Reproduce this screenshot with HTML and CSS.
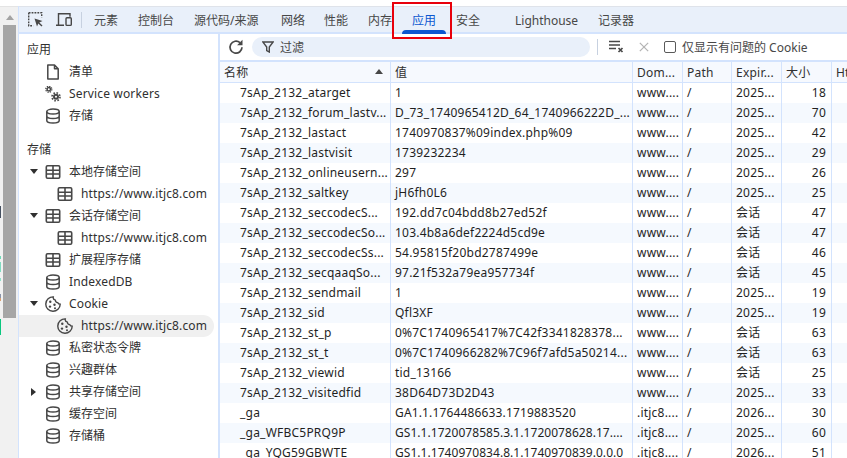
FILE: index.html
```html
<!DOCTYPE html>
<html lang="zh">
<head>
<meta charset="utf-8">
<title>DevTools</title>
<link rel="stylesheet" href="styles.css">
</head>
<body>
<svg class="defs" width="0" height="0">
  <symbol id="db" viewBox="0 0 16 16"><ellipse cx="8" cy="3.600" rx="6.200" ry="2.500" fill="none" stroke="currentColor" stroke-width="1.500"/><path d="M1.800 3.600v8.800c0 1.400 2.800 2.500 6.200 2.500s6.200-1.100 6.200-2.500V3.600M1.800 8c0 1.400 2.800 2.500 6.200 2.500s6.200-1.100 6.200-2.500" fill="none" stroke="currentColor" stroke-width="1.500"/></symbol>
  <symbol id="grid" viewBox="0 0 16 16"><rect x="1.300" y="1.800" width="13.400" height="12.400" rx="1.200" fill="none" stroke="currentColor" stroke-width="1.600"/><path d="M1.300 6.200h13.400M1.300 10h13.400M8 1.800v12.400" fill="none" stroke="currentColor" stroke-width="1.600"/></symbol>
  <symbol id="cookie" viewBox="0 0 16 16"><path d="M8.300 .9a2.700 2.700 0 0 0 2 3.200 2.700 2.700 0 0 0 2.500 2.600 2.700 2.700 0 0 0 2.400 1.500A7.200 7.200 0 1 1 8.300 .9z" fill="none" stroke="currentColor" stroke-width="1.400"/><circle cx="5.300" cy="5.800" r="1.200" fill="currentColor"/><circle cx="5" cy="10.600" r="1.200" fill="currentColor"/><circle cx="9.500" cy="8.800" r="1.200" fill="currentColor"/><circle cx="10" cy="12.300" r="1" fill="currentColor"/></symbol>
</svg>
<div class="page">
  <div class="rail">
    <div class="rail-arrow"></div>
    <div class="rail-thumb"></div>
  </div>
  <div class="devtools">
    <div class="tabbar">
      <svg class="tool-icon" viewBox="0 0 15 15"><path d="M.7.700h13v4.500M.7.700v13h4.500" fill="none" stroke="#474747" stroke-width="1.400" stroke-dasharray="1.800 1.100"/><path d="M6.500 6.500l8 2.600-3.200 1.300 3.200 3.200-1 1-3.200-3.200-1.300 3.200z" fill="#474747"/></svg>
      <svg class="tool-icon device" viewBox="0 0 16 15"><path d="M0 13.300h8M2.500 13V1.700h11.500v3" fill="none" stroke="#474747" stroke-width="1.400"/><rect x="10" y="5.700" width="5.300" height="7.700" rx="1" fill="none" stroke="#474747" stroke-width="1.400"/></svg>
      <span class="tab-sep"></span>
      <span class="tab w-yuansu">元素</span>
      <span class="tab w-console">控制台</span>
      <span class="tab w-source">源代码/来源</span>
      <span class="tab w-net">网络</span>
      <span class="tab w-perf">性能</span>
      <span class="tab w-mem">内存</span>
      <span class="tab active w-app">应用</span>
      <span class="tab w-sec">安全</span>
      <span class="tab w-light">Lighthouse</span>
      <span class="tab w-rec">记录器</span>
    </div>
    <div class="panes">
      <aside class="sidebar">
        <div class="section">应用</div>
        <div class="item"><span class="arrow"></span><svg class="ic" viewBox="0 0 16 16"><path d="M2.800 .9h6.700L13.200 4.700v10.400H2.800zM9.500 .9v3.800h3.700" fill="none" stroke="currentColor" stroke-width="1.500" stroke-linejoin="round"/></svg><span>清单</span></div>
        <div class="item"><span class="arrow"></span><svg class="ic" viewBox="0 0 16 16"><g fill="none" stroke="currentColor"><circle cx="3.800" cy="3.300" r="1.700" stroke-width="1.500"/><circle cx="3.800" cy="3.300" r="3" stroke-width="1.300" stroke-dasharray="1.300 1.050"/><circle cx="11" cy="10.800" r="2" stroke-width="2"/><circle cx="11" cy="10.800" r="4" stroke-width="1.600" stroke-dasharray="1.600 1.540"/></g></svg><span class="lat">Service workers</span></div>
        <div class="item"><span class="arrow"></span><svg class="ic"><use href="#db"/></svg><span>存储</span></div>
        <div class="section second">存储</div>
        <div class="item"><span class="arrow down"></span><svg class="ic"><use href="#grid"/></svg><span>本地存储空间</span></div>
        <div class="item child"><svg class="ic"><use href="#grid"/></svg><span class="lat">https://www.itjc8.com</span></div>
        <div class="item"><span class="arrow down"></span><svg class="ic"><use href="#grid"/></svg><span>会话存储空间</span></div>
        <div class="item child"><svg class="ic"><use href="#grid"/></svg><span class="lat">https://www.itjc8.com</span></div>
        <div class="item"><span class="arrow"></span><svg class="ic"><use href="#grid"/></svg><span>扩展程序存储</span></div>
        <div class="item"><span class="arrow"></span><svg class="ic"><use href="#db"/></svg><span class="lat">IndexedDB</span></div>
        <div class="item"><span class="arrow down"></span><svg class="ic"><use href="#cookie"/></svg><span class="lat">Cookie</span></div>
        <div class="item child selected"><svg class="ic"><use href="#cookie"/></svg><span class="lat">https://www.itjc8.com</span></div>
        <div class="item"><span class="arrow"></span><svg class="ic"><use href="#db"/></svg><span>私密状态令牌</span></div>
        <div class="item"><span class="arrow"></span><svg class="ic"><use href="#db"/></svg><span>兴趣群体</span></div>
        <div class="item"><span class="arrow right"></span><svg class="ic"><use href="#db"/></svg><span>共享存储空间</span></div>
        <div class="item"><span class="arrow"></span><svg class="ic"><use href="#db"/></svg><span>缓存空间</span></div>
        <div class="item"><span class="arrow"></span><svg class="ic"><use href="#db"/></svg><span>存储桶</span></div>
      </aside>
      <main class="main">
        <div class="filterbar">
          <svg class="reload" viewBox="0 0 16 16"><path d="M14 8.300A6 6 0 1 1 12 3.700" fill="none" stroke="#474747" stroke-width="1.700"/><path d="M14.500 .8v5.400H9.100z" fill="#474747"/></svg>
          <div class="filter"><svg class="funnel" viewBox="0 0 12 12"><path d="M.8 1h10.400L7.300 6v5L4.700 9.500V6z" fill="none" stroke="#474747" stroke-width="1.400"/></svg><span class="filter-label">过滤</span></div>
          <span class="bar-sep"></span>
          <svg class="clear" viewBox="0 0 16 16"><path d="M0 2.500h11M0 6h11M0 9.500h7" stroke="#474747" stroke-width="1.400" fill="none"/><path d="M9.500 9l4 4M13.500 9l-4 4" stroke="#474747" stroke-width="1.700" fill="none"/></svg>
          <svg class="close" viewBox="0 0 12 12"><path d="M1 1l10 10M11 1L1 11" stroke="#b4b4b4" stroke-width="1.500" fill="none"/></svg>
          <span class="check"></span>
          <span class="check-label">仅显示有问题的 Cookie</span>
        </div>
        <table class="grid">
          <colgroup><col class="c1"><col class="c2"><col class="c3"><col class="c4"><col class="c5"><col class="c6"><col class="c7"></colgroup>
          <thead><tr><th class="sorted">名称</th><th>值</th><th>Dom...</th><th>Path</th><th>Expir...</th><th>大小</th><th>Htt</th></tr></thead>
          <tbody>
            <tr><td class="n">7sAp_2132_atarget</td><td>1</td><td>www....</td><td>/</td><td>2025...</td><td class="r">18</td><td></td></tr>
            <tr><td class="n">7sAp_2132_forum_lastv...</td><td>D_73_1740965412D_64_1740966222D_...</td><td>www....</td><td>/</td><td>2025...</td><td class="r">70</td><td></td></tr>
            <tr><td class="n">7sAp_2132_lastact</td><td>1740970837%09index.php%09</td><td>www....</td><td>/</td><td>2025...</td><td class="r">42</td><td></td></tr>
            <tr><td class="n">7sAp_2132_lastvisit</td><td>1739232234</td><td>www....</td><td>/</td><td>2025...</td><td class="r">29</td><td></td></tr>
            <tr><td class="n">7sAp_2132_onlineusern...</td><td>297</td><td>www....</td><td>/</td><td>2025...</td><td class="r">26</td><td></td></tr>
            <tr><td class="n">7sAp_2132_saltkey</td><td>jH6fh0L6</td><td>www....</td><td>/</td><td>2025...</td><td class="r">25</td><td></td></tr>
            <tr><td class="n">7sAp_2132_seccodecS...</td><td>192.dd7c04bdd8b27ed52f</td><td>www....</td><td>/</td><td>会话</td><td class="r">47</td><td></td></tr>
            <tr><td class="n">7sAp_2132_seccodecSo...</td><td>103.4b8a6def2224d5cd9e</td><td>www....</td><td>/</td><td>会话</td><td class="r">47</td><td></td></tr>
            <tr><td class="n">7sAp_2132_seccodecSs...</td><td>54.95815f20bd2787499e</td><td>www....</td><td>/</td><td>会话</td><td class="r">46</td><td></td></tr>
            <tr><td class="n">7sAp_2132_secqaaqSo...</td><td>97.21f532a79ea957734f</td><td>www....</td><td>/</td><td>会话</td><td class="r">45</td><td></td></tr>
            <tr><td class="n">7sAp_2132_sendmail</td><td>1</td><td>www....</td><td>/</td><td>2025...</td><td class="r">19</td><td></td></tr>
            <tr><td class="n">7sAp_2132_sid</td><td>Qfl3XF</td><td>www....</td><td>/</td><td>2025...</td><td class="r">19</td><td></td></tr>
            <tr><td class="n">7sAp_2132_st_p</td><td>0%7C1740965417%7C42f3341828378...</td><td>www....</td><td>/</td><td>会话</td><td class="r">63</td><td></td></tr>
            <tr><td class="n">7sAp_2132_st_t</td><td>0%7C1740966282%7C96f7afd5a50214...</td><td>www....</td><td>/</td><td>会话</td><td class="r">63</td><td></td></tr>
            <tr><td class="n">7sAp_2132_viewid</td><td>tid_13166</td><td>www....</td><td>/</td><td>会话</td><td class="r">25</td><td></td></tr>
            <tr><td class="n">7sAp_2132_visitedfid</td><td>38D64D73D2D43</td><td>www....</td><td>/</td><td>2025...</td><td class="r">33</td><td></td></tr>
            <tr><td class="n">_ga</td><td class="mid">GA1.1.1764486633.1719883520</td><td>.itjc8....</td><td>/</td><td>2026...</td><td class="r">30</td><td></td></tr>
            <tr><td class="n">_ga_WFBC5PRQ9P</td><td class="tight">GS1.1.1720078585.3.1.1720078628.17....</td><td>.itjc8....</td><td>/</td><td>2025...</td><td class="r">60</td><td></td></tr>
            <tr><td class="n">_ga_YQG59GBWTE</td><td class="tight">GS1.1.1740970834.8.1.1740970839.0.0.0</td><td>.itjc8....</td><td>/</td><td>2026...</td><td class="r">51</td><td></td></tr>
          </tbody>
        </table>
      </main>
    </div>
    <div class="redbox"></div>
  </div>
</div>
</body>
</html>
```
FILE: styles.css
```css
* { box-sizing: border-box; }
html, body { margin: 0; height: 100%; overflow: hidden; background: #fff; }
body { font: 12px/16px "Noto Sans", "Noto Sans CJK SC", sans-serif; color: #1f1f1f; }
.defs { position: absolute; }
.page { display: flex; height: 458px; padding-top: 6px; }
.rail { position: relative; width: 18px; flex: none; background: #f1f1f1; padding: 0 2px 0 3px; border-top: 1px solid #e4e4e4; }
.rail::before { content: ""; position: absolute; left: 0; top: 199px; width: 1px; height: 132px; background: linear-gradient(to bottom, #455060 0 12px, transparent 12px 50px, #6fd9b5 50px 53px, transparent 53px 56px, #7fdcc0 56px 66px, transparent 66px 72px, #8fe0c8 72px 75px, transparent 75px 88px, #8a94a8 88px 92px, #d9a070 92px 95px, transparent 95px 113px, #0ac77f 113px 129px, transparent 129px); }
.rail-arrow { width: 0; height: 0; margin: 8px auto 5px; border: 4px solid transparent; border-top: 0; border-bottom: 5px solid #a3a3a3; }
.rail-thumb { width: 13px; height: 293px; background: #a6a6a6; }
.devtools { position: relative; flex: 1; min-width: 0; display: flex; flex-direction: column; border-left: 1px solid #d3e3fd; }
.tabbar { height: 28px; flex: none; display: flex; align-items: center; background: #e9f0fa; border-top: 1px solid #dfe3ea; border-bottom: 2px solid #d3e3fd; padding-left: 9px; color: #474747; }
.tool-icon { width: 15px; height: 15px; flex: none; }
.tool-icon.device { width: 16px; margin-left: 13px; }
.tab-sep { width: 1px; height: 16px; background: #c7d1e0; margin: 0 12px 0 9px; flex: none; }
.tab { flex: none; height: 25px; line-height: 27px; white-space: nowrap; position: relative; }
.w-yuansu { width: 44px; }
.w-console { width: 56px; }
.w-source { width: 87px; }
.w-net { width: 43px; }
.w-perf { width: 44px; }
.w-mem { width: 34px; }
.w-app { width: 44px; margin-right: 10px; padding-left: 10px; color: #0b57d0; }
.w-app::after { content: ""; position: absolute; left: 0; right: 0; bottom: -2px; height: 4px; border-radius: 4px 4px 0 0; background: #0b57d0; }
.w-sec { width: 59px; }
.w-light { width: 83px; }
.w-rec { width: 60px; }
.panes { flex: 1; display: flex; min-height: 0; }
.sidebar { width: 201px; flex: none; padding-top: 5px; border-right: 2px solid #d3e3fd; color: #303030; }
.section { height: 22px; line-height: 22px; padding-left: 8px; }
.section.second { margin-top: 12px; }
.item { height: 22px; display: flex; align-items: center; padding-left: 8px; white-space: nowrap; }
.lat { letter-spacing: .15px; }
.arrow { width: 15px; height: 10px; flex: none; position: relative; }
.arrow.down::before { content: ""; position: absolute; left: 3px; top: 2px; border: 4px solid transparent; border-top: 5px solid #303030; border-bottom: 0; }
.arrow.right::before { content: ""; position: absolute; left: 4px; top: 1px; border: 4px solid transparent; border-left: 5px solid #303030; border-right: 0; }
.ic { width: 16px; height: 16px; flex: none; margin: 0 8px 0 3px; color: #474747; }
.item.child { padding-left: 38px; }
.item.child .ic { margin: 0 8px 0 0; }
.item.selected { background: #f0f0f0; border-radius: 0 11px 11px 0; margin-right: 4px; }
.main { flex: 1; min-width: 0; }
.filterbar { height: 26px; display: flex; align-items: center; padding-left: 8px; color: #474747; }
.reload { width: 16px; height: 16px; flex: none; }
.filter { width: 338px; height: 20px; margin-left: 8px; background: #e9f0fa; border-radius: 10px; display: flex; align-items: center; padding-left: 10px; flex: none; }
.funnel { width: 12px; height: 12px; margin-right: 6px; }
.filter-label { padding-top: 2px; }
.bar-sep { width: 1px; height: 16px; background: #c7d1e0; margin: 0 11px 0 7px; flex: none; }
.clear { width: 16px; height: 16px; flex: none; }
.close { width: 10px; height: 10px; flex: none; margin-left: 14px; }
.check { width: 12px; height: 12px; border: 1px solid #5a5a5a; border-radius: 2px; margin: 0 6px 0 15px; flex: none; }
.check-label { white-space: nowrap; padding-top: 2px; }
.grid { width: 627px; table-layout: fixed; border-collapse: separate; border-spacing: 0; border-top: 2px solid #d3e3fd; }
.c1 { width: 171px; } .c2 { width: 242px; } .c3 { width: 50px; } .c4 { width: 49px; } .c5 { width: 50px; } .c6 { width: 50px; } .c7 { width: 15px; }
.grid th, .grid td { padding: 0 0 0 4px; text-align: left; white-space: nowrap; overflow: hidden; font-weight: 400; border-right: 1px solid #d3e3fd; letter-spacing: .22px; }
.grid th:last-child, .grid td:last-child { border-right: 0; }
.grid th { height: 21px; padding-top: 2px; background: #f6f9fe; border-bottom: 1px solid #d3e3fd; color: #303030; }
.grid td { height: 20px; }
.grid td.mid { letter-spacing: .15px; }
.grid td.tight { letter-spacing: .05px; }
.grid tbody tr:nth-child(even) td { background: #f5f9fe; }
.grid td.n { padding-left: 20px; }
.grid td.r { text-align: right; padding-right: 5px; }
.grid th.sorted { position: relative; }
.grid th.sorted::after { content: ""; position: absolute; right: 7px; top: 7px; border: 4px solid transparent; border-top: 0; border-bottom: 5px solid #474747; }
.redbox { position: absolute; left: 373px; top: -4px; width: 60px; height: 37px; border: 2px solid #e8000b; pointer-events: none; }
```
